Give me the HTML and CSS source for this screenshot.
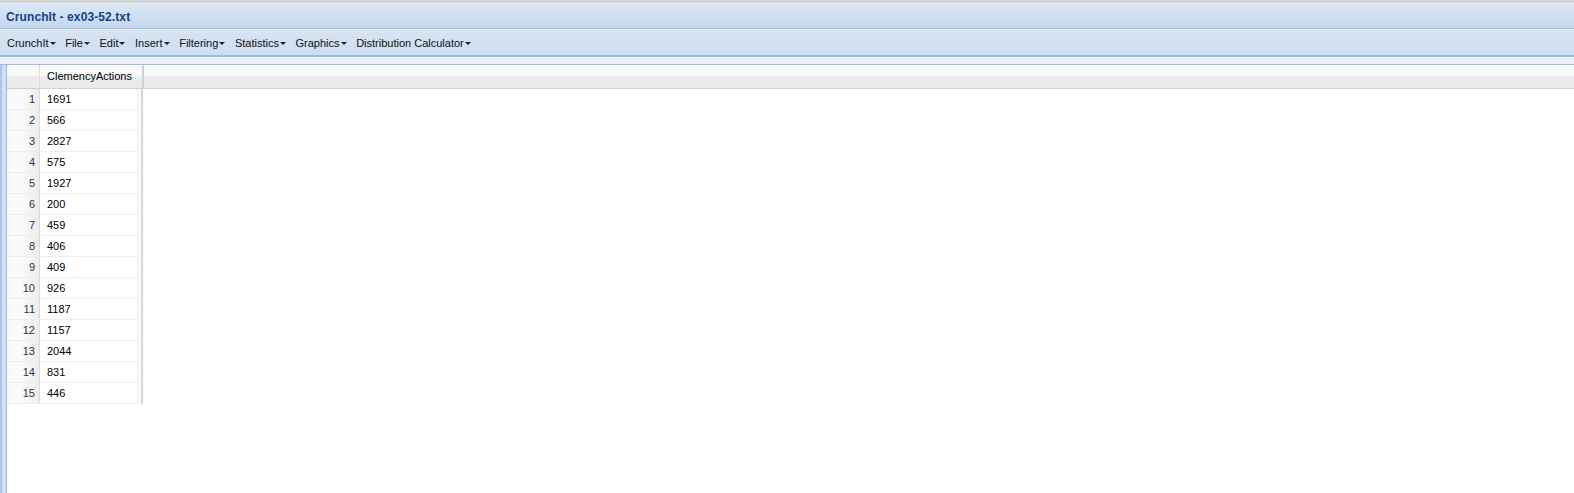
FILE: index.html
```html
<!DOCTYPE html>
<html lang="en">
<head>
  <meta charset="UTF-8">
  <title>CrunchIt - ex03-52.txt</title>
  <link rel="stylesheet" href="styles.css">
</head>
<body>
  <div class="janela">
    <div class="titulo">CrunchIt - ex03-52.txt</div>
    <div class="menu">
      <span class="item">CrunchIt<i class="seta"></i></span>
      <span class="item">File<i class="seta"></i></span>
      <span class="item">Edit<i class="seta"></i></span>
      <span class="item">Insert<i class="seta"></i></span>
      <span class="item">Filtering<i class="seta"></i></span>
      <span class="item">Statistics<i class="seta"></i></span>
      <span class="item">Graphics<i class="seta"></i></span>
      <span class="item">Distribution Calculator<i class="seta"></i></span>
    </div>
    <div class="faixa"></div>
    <div class="corpo">
      <div class="lateral"></div>
      <div class="grade">
        <div class="cabecalho">
          <div class="num"></div>
          <div class="col">ClemencyActions</div>
          <div class="resto"></div>
        </div>
        <div id="linhas"></div>
      </div>
    </div>
  </div>

  <script>
    // dados da coluna ClemencyActions
    const valores = [1691, 566, 2827, 575, 1927, 200, 459, 406, 409, 926, 1187, 1157, 2044, 831, 446];

    const linhas = document.getElementById("linhas");
    valores.forEach((v, i) => {
      const linha = document.createElement("div");
      linha.classList.add("linha");
      linha.innerHTML = `<div class="num">${i + 1}</div><div class="celula">${v}</div><div class="sep"></div>`;
      linhas.appendChild(linha);
    });
  </script>
</body>
</html>
```

FILE: styles.css
```css
body {
  margin: 0;
  font-family: 'Liberation Sans', Arial, sans-serif;
  background: #ffffff;
  height: 493px;
  overflow: hidden;
}

.janela {
  border-top: 3px solid #d4d4d4;
  display: flex;
  flex-direction: column;
  height: 490px;
}

.titulo {
  height: 21px;
  line-height: 21px;
  padding-top: 3px;
  border-top: 1px solid #eaf1fb;
  border-bottom: 1px solid #99bbe8;
  background: linear-gradient(#dce7f5, #c4d7ef);
  color: #15428b;
  font-weight: bold;
  font-size: 12px;
  padding-left: 6px;
  letter-spacing: 0.1px;
}

.menu {
  height: 24px;
  padding-top: 1px;
  border-top: 1px solid #e4ecf7;
  border-bottom: 2px solid #99bbe8;
  background: linear-gradient(#d8e4f3, #cddcef);
  display: flex;
  align-items: center;
  padding-left: 7px;
  gap: 9.6px;
  font-size: 11px;
  color: #111;
}

.item {
  display: flex;
  align-items: center;
}

.seta {
  display: inline-block;
  width: 0;
  height: 0;
  margin-left: 1px;
  border-left: 3px solid transparent;
  border-right: 3px solid transparent;
  border-top: 3px solid #222;
}

.faixa {
  height: 7px;
  background: #e9f0fa;
  border-bottom: 1px solid #99bbe8;
}

.corpo {
  flex: 1;
  display: flex;
}

.lateral {
  width: 7px;
  background: linear-gradient(to right, #a9c6ee 0, #a9c6ee 2px, #cfe0f7 2px, #cfe0f7 6px, #99bbe8 6px);
}

.grade {
  flex: 1;
}

.cabecalho {
  display: flex;
  height: 23px;
  border-bottom: 1px solid #d0d0d0;
  background: linear-gradient(#f9f9f9, #f9f9f9 45%, #ebebeb 55%, #ececec);
  font-size: 11px;
  color: #000;
}

.cabecalho .num {
  width: 32px;
  border-right: 1px solid #dddddd;
  background: none;
}

.cabecalho .col {
  width: 95px;
  line-height: 23px;
  padding-left: 7px;
  border-right: 2px solid #d0d0d0;
}

.cabecalho .resto {
  flex: 1;
}

.linha {
  display: flex;
  height: 21px;
  font-size: 11px;
}

.linha .num {
  width: 28px;
  padding-right: 4px;
  text-align: right;
  line-height: 20px;
  color: #333;
  border-bottom: 1px solid #ededed;
  border-right: 1px solid #dcdcdc;
  background: linear-gradient(to right, #fafafa, #fafafa 50%, #ececec);
}

.celula {
  width: 90px;
  padding-left: 7px;
  line-height: 20px;
  color: #000;
  border-bottom: 1px solid #ededed;
  border-right: 1px solid #ededed;
}

.sep {
  width: 3px;
  border-right: 2px solid #d6d6d6;
}
```
